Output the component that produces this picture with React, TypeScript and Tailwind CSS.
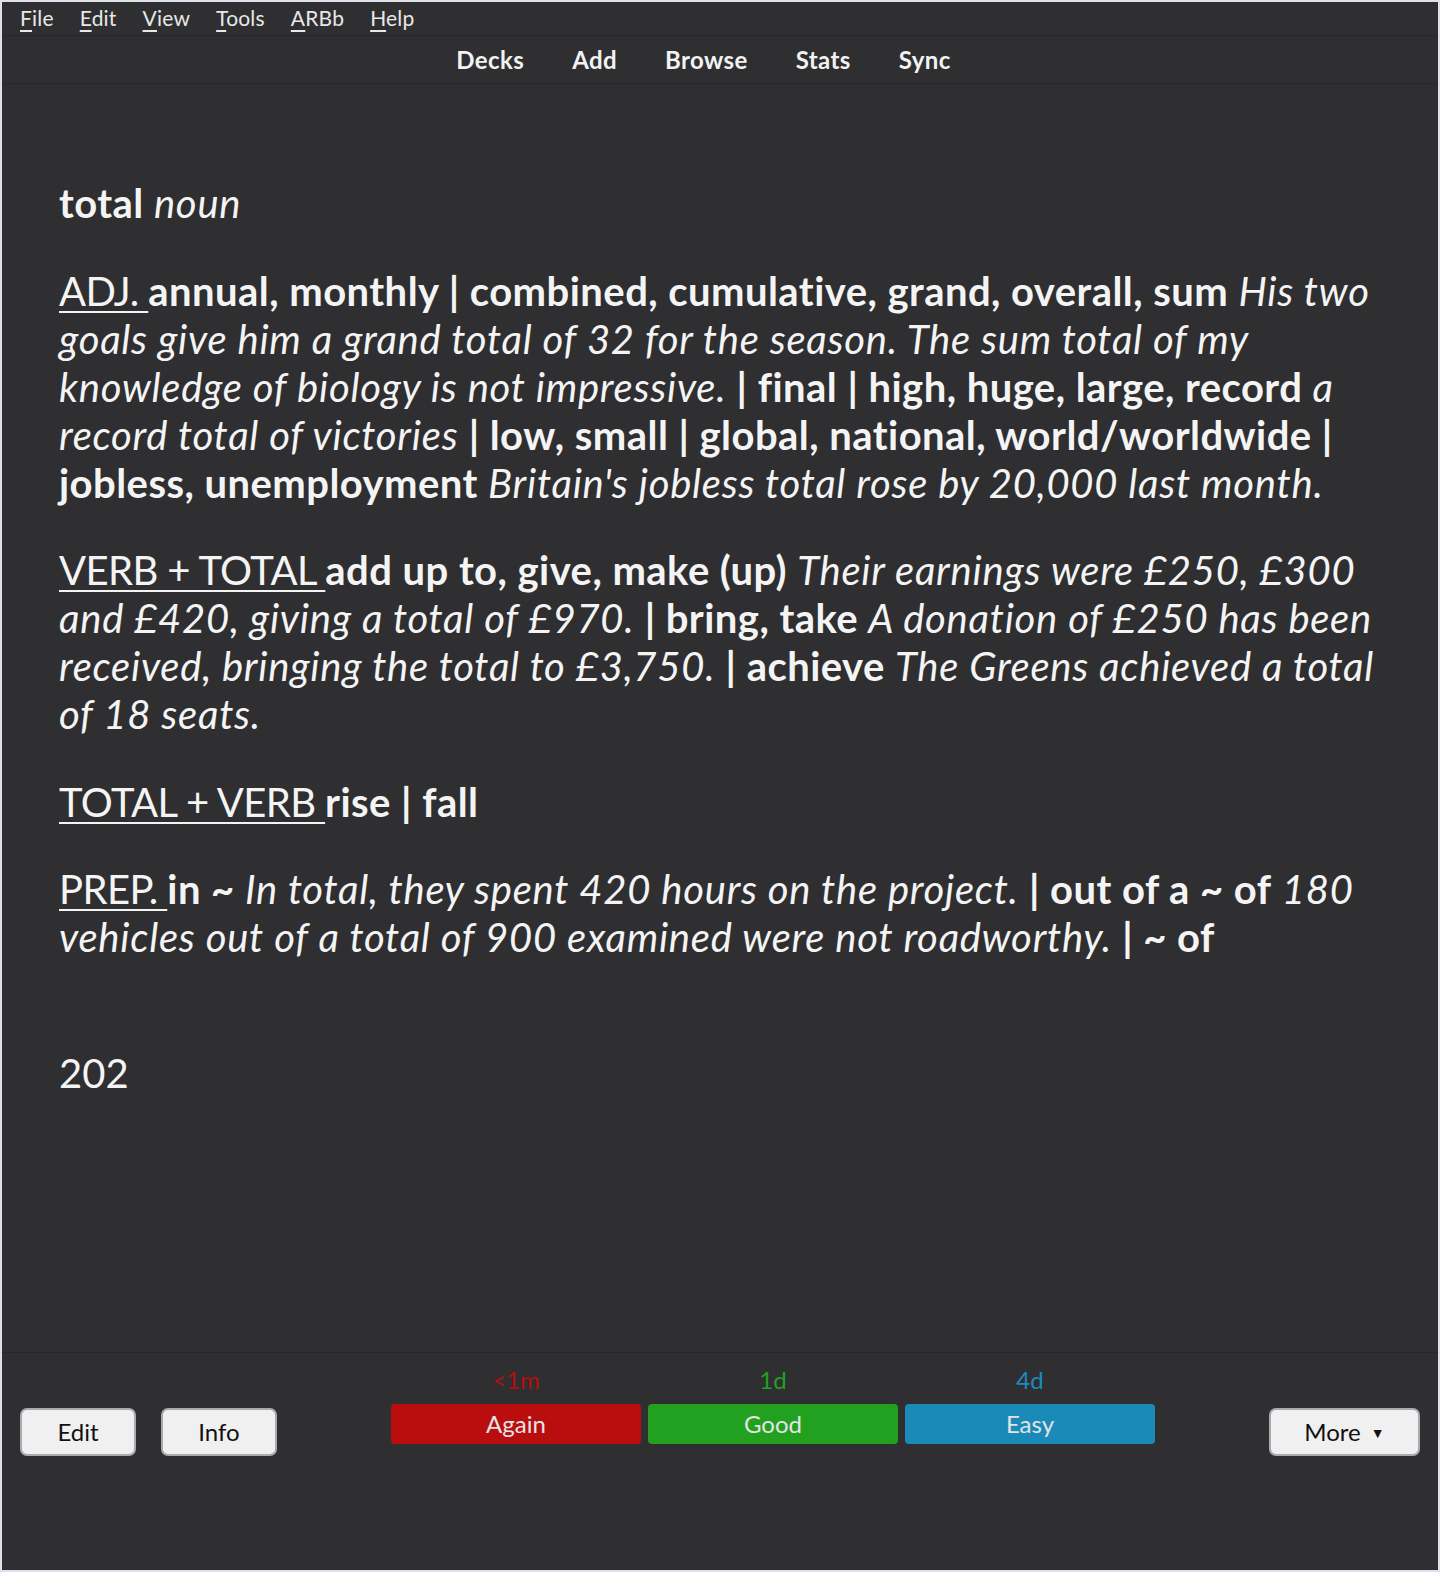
import React from "react";

const U = ({ children }: { children: React.ReactNode }) => (
  <span className="underline decoration-[2px] underline-offset-[5px] tracking-[-0.6px]">{children}</span>
);
const B = ({ children }: { children: React.ReactNode }) => (
  <b className="font-bold tracking-[0.45px]">{children}</b>
);
const I = ({ children }: { children: React.ReactNode }) => (
  <i className="italic tracking-[0.75px]">{children}</i>
);

function MenuItem({ first, rest }: { first: string; rest: string }) {
  return (
    <span>
      <span className="underline decoration-[2px] underline-offset-[4px]">{first}</span>
      {rest}
    </span>
  );
}

function SideButton({ label, caret }: { label: string; caret?: boolean }) {
  return (
    <button className="h-[48px] rounded-[7px] border-2 border-[#a9aab0] bg-[#f0f0f0] text-[24px] text-[#111] flex items-center justify-center gap-[10px]">
      {label}
      {caret && <span className="text-[14px]">▼</span>}
    </button>
  );
}

function Answer({ due, label, text, bg }: { due: string; label: string; text: string; bg: string }) {
  return (
    <div className="flex flex-col items-center">
      <div className={`text-[24px] leading-[24px] ${text}`}>{due}</div>
      <button className={`mt-[12px] h-[40px] w-full rounded-[4px] text-[24px] text-[#e4e4e4] ${bg}`}>{label}</button>
    </div>
  );
}

export default function App() {
  return (
    <div className="w-[1440px] h-[1572px] border-2 border-[#dde1ea] bg-[#2f2f31] flex flex-col font-['Lato','Noto_Sans',sans-serif] text-[#f4f4f4]">
      {/* menu bar */}
      <div className="h-[34px] shrink-0 border-b border-[#28282a] flex items-center gap-[26px] pl-[18px] pb-[2px] text-[21px] tracking-[0.2px] text-[#e8e8e8]">
        <MenuItem first="F" rest="ile" />
        <MenuItem first="E" rest="dit" />
        <MenuItem first="V" rest="iew" />
        <MenuItem first="T" rest="ools" />
        <MenuItem first="A" rest="RBb" />
        <MenuItem first="H" rest="elp" />
      </div>

      {/* toolbar */}
      <div className="h-[48px] shrink-0 border-b border-[#28282a] flex items-center justify-center gap-[48px] pr-[33px] text-[24px] tracking-[0.4px] font-bold text-[#f2f2f2]">
        <span>Decks</span>
        <span>Add</span>
        <span>Browse</span>
        <span>Stats</span>
        <span>Sync</span>
      </div>

      {/* card */}
      <div className="flex-1 px-[57px] pt-[95px] text-[40px] leading-[48px] whitespace-nowrap">
        <div>
          <B>total</B> <I>noun</I>
        </div>

        <div className="mt-[40px]">
          <U>ADJ. </U>
          <B>annual, monthly | combined, cumulative, grand, overall, sum</B> <I>His two</I>
          <br />
          <I>goals give him a grand total of 32 for the season. The sum total of my</I>
          <br />
          <I>knowledge of biology is not impressive.</I> <B>| final | high, huge, large, record</B> <I>a</I>
          <br />
          <I>record total of victories</I> <B>| low, small | global, national, world/worldwide |</B>
          <br />
          <B>jobless, unemployment</B> <I>Britain's jobless total rose by 20,000 last month.</I>
        </div>

        <div className="mt-[39px]">
          <U>VERB + TOTAL </U>
          <B>add up to, give, make (up)</B> <I>Their earnings were £250, £300</I>
          <br />
          <I>and £420, giving a total of £970.</I> <B>| bring, take</B> <I>A donation of £250 has been</I>
          <br />
          <I>received, bringing the total to £3,750.</I> <B>| achieve</B> <I>The Greens achieved a total</I>
          <br />
          <I>of 18 seats.</I>
        </div>

        <div className="mt-[40px]">
          <U>TOTAL + VERB </U>
          <B>rise | fall</B>
        </div>

        <div className="mt-[39px]">
          <U>PREP. </U>
          <B>in ~</B> <I>In total, they spent 420 hours on the project.</I> <B>| out of a ~ of</B> <I>180</I>
          <br />
          <I>vehicles out of a total of 900 examined were not roadworthy.</I> <B>| ~ of</B>
        </div>

        <div className="mt-[88px]">202</div>
      </div>

      {/* bottom bar */}
      <div className="h-[218px] shrink-0 border-t border-[#28282a] flex items-start justify-between px-[18px]">
        <div className="mt-[55px] grid grid-cols-[116px_116px] gap-[25px]">
          <SideButton label="Edit" />
          <SideButton label="Info" />
        </div>
        <div className="mt-[15px] grid grid-cols-[250px_250px_250px] gap-[7px]">
          <Answer due="<1m" label="Again" text="text-[#b70d0d]" bg="bg-[#b90d0e]" />
          <Answer due="1d" label="Good" text="text-[#22a020]" bg="bg-[#21a11f]" />
          <Answer due="4d" label="Easy" text="text-[#1a8bb9]" bg="bg-[#1a8bb9]" />
        </div>
        <div className="mt-[55px] w-[151px] grid">
          <SideButton label="More" caret />
        </div>
      </div>
    </div>
  );
}
